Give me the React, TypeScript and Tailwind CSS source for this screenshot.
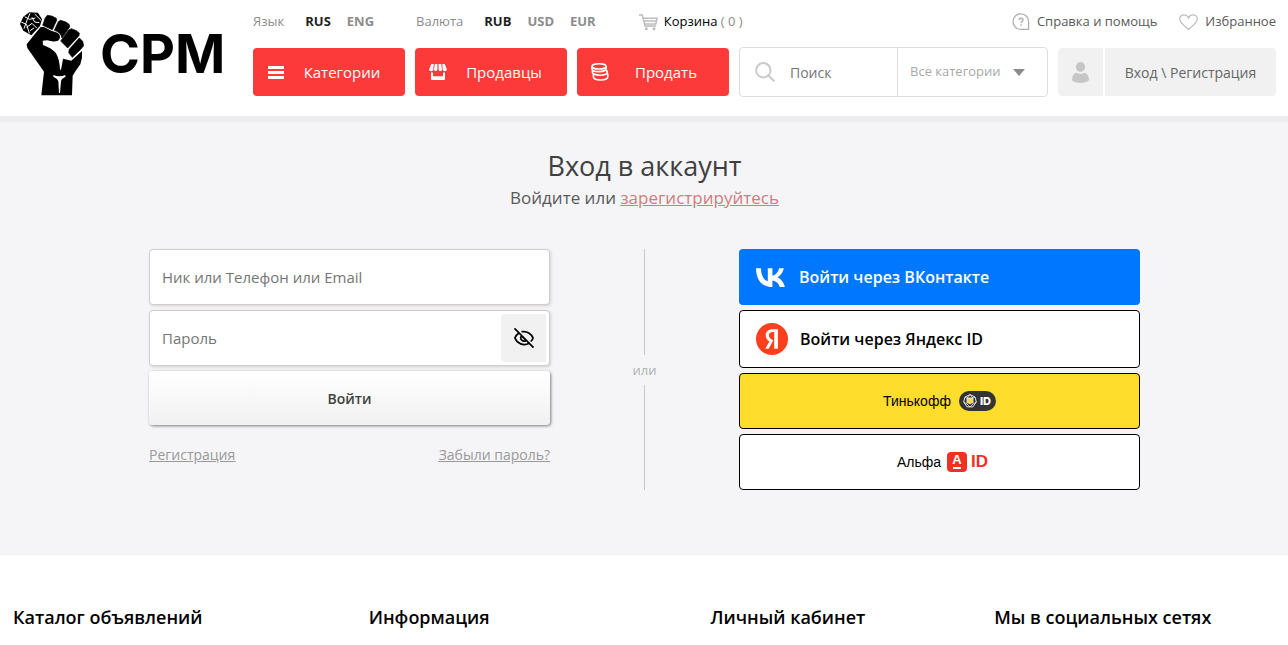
import type { ReactNode } from "react";

const languages = ["RUS", "ENG"];
const currencies = ["RUB", "USD", "EUR"];

const footerColumns = [
  { title: "Каталог объявлений", width: "w-[356px]" },
  { title: "Информация", width: "w-[342px]" },
  { title: "Личный кабинет", width: "w-[284px]" },
  { title: "Мы в социальных сетях", width: "w-[281px]" },
];

function FistLogo() {
  return (
    <svg viewBox="30 36 192 252" className="h-[84px] w-16 shrink-0" aria-hidden>
      {/* microphone */}
      <path d="M30 72 40 50 58 37 84 38 96 58 90 78 64 106 40 92Z" fill="#000" />
      <path
        d="M34 66 50 74 58 100M44 50 58 58 76 54M60 40 52 58 42 86M74 42 94 62M50 82 66 70 80 84M66 52 74 66 88 68M60 92 72 84"
        fill="none"
        stroke="#fff"
        strokeWidth="3"
      />
      {/* arm and palm */}
      <path
        d="M94 286 102 215 52 144 50 133 74 103 92 81 102 81 124 92 142 98Q153 104 149 116L144 122Q130 127 112 121L98 122 99 135Q125 144 138 160 149 180 150 209H153Q156 194 159 176L184 182 216 153Q218 175 211 193 196 214 188 227L186 286Z"
        fill="#000"
      />
      {/* fingers */}
      <g fill="#000" stroke="#000" strokeWidth="2" strokeLinejoin="round">
        <path d="M112 46Q126 46 139 55L140 61 127 89 98 76 106 53Z" />
        <path d="M151 61Q169 64 178 74L179 81 156 114Q153 97 133 91L145 65Z" />
        <path d="M184 86Q199 90 208 99L207 107 173 144 152 123 176 90Z" />
        <path d="M208 114 218 124 221 137 211 149 187 172 176 158 178 148 203 119Z" />
      </g>
      <path d="M130 225Q148 233 166 225L166 231Q154 236 153 244L150 279H147L145 244Q142 235 130 230Z" fill="#fff" />
    </svg>
  );
}

function MenuIcon() {
  return (
    <svg viewBox="0 0 16 13" className="h-[13px] w-4" fill="currentColor" aria-hidden>
      <path d="M0 0h16v3H0zM0 5h16v3H0zM0 10h16v3H0z" />
    </svg>
  );
}

function ShopIcon() {
  return (
    <svg viewBox="0 0 18 16" className="h-4 w-[18px]" fill="currentColor" aria-hidden>
      <path d="M2.3 0h2.4L4.300 5.200a2 2 0 0 1-4.200 0zM5.800 0h2.600v5.200a1.700 1.700 0 0 1-3.400.2zM9.600 0h2.600l.8 5.400a1.700 1.700 0 0 1-3.400-.2zM13.300 0h2.400l2.200 5.200a2 2 0 0 1-4.200 0z" />
      <path d="M2 8.400h2v3.800h10V8.400h2V15a1 1 0 0 1-1 1H3a1 1 0 0 1-1-1z" />
    </svg>
  );
}

function CoinsIcon() {
  return (
    <svg viewBox="0 0 18 18" className="size-[18px]" fill="none" stroke="currentColor" strokeWidth="1.6" aria-hidden>
      <ellipse cx="8" cy="3.4" rx="7.1" ry="2.6" />
      <path d="M.9 3.4v2.4c0 1.6 3.2 2.8 7 2.8s7.2-1.2 7.2-2.8V3.4M1.4 7.2v2c0 1.7 3.4 3 7.5 3s7.4-1.2 7.4-2.9c0-1.3-.7-1.9-1.5-2.3M2.400 11.500v2.300c0 1.800 3.100 3.200 7.200 3.200s7.200-1.400 7.200-3.200v-2.300c0-.7-.3-1.100-.8-1.500" />
    </svg>
  );
}

function CartIcon() {
  return (
    <svg viewBox="0 0 19 17" className="h-[17px] w-[19px]" fill="none" stroke="#bdbdbd" strokeWidth="1.5" aria-hidden>
      <path d="M0 .9h3.3L6 12h11M4.2 4.2h13.9L16.8 10H5.8M5 7h12.4" />
      <circle cx="7.3" cy="14.8" r="1.5" fill="#bdbdbd" stroke="none" />
      <circle cx="15" cy="14.8" r="1.5" fill="#bdbdbd" stroke="none" />
    </svg>
  );
}

function HelpIcon() {
  return (
    <svg viewBox="0 0 18 18" className="size-[18px]" fill="none" stroke="#b0b0b0" strokeWidth="1.3" aria-hidden>
      <path d="M16.6 16.4H9A7.8 7.8 0 1 1 16.6 9z" />
      <path d="M7 7c.1-1.1.9-1.8 2-1.8s2 .7 2 1.7c0 1.4-1.9 1.4-1.9 3.1M9.1 11.3v1.4" strokeWidth="1.4" />
    </svg>
  );
}

function HeartIcon() {
  return (
    <svg viewBox="0 0 19 16" className="h-4 w-[19px]" fill="none" stroke="#bdbdbd" strokeWidth="1.2" aria-hidden>
      <path d="M9.5 15.2C6.5 12.7.7 9.3.7 5.1.7 2.5 2.6.8 4.8.8 7 .8 8.8 2 9.5 4 10.2 2 12 .8 14.2.8c2.2 0 4.1 1.7 4.1 4.3 0 4.2-5.8 7.6-8.8 10.1z" />
    </svg>
  );
}

function SearchIcon() {
  return (
    <svg viewBox="0 0 20 20" className="size-5" fill="none" stroke="#cacaca" strokeWidth="2" aria-hidden>
      <circle cx="8.3" cy="8.3" r="7.2" />
      <path d="m13.5 13.5 5.8 5.8" />
    </svg>
  );
}

function UserIcon() {
  return (
    <svg viewBox="0 0 17 21" className="h-[21px] w-[17px]" fill="#c6c6c6" aria-hidden>
      <ellipse cx="8.5" cy="5" rx="4.6" ry="5" />
      <path d="M4 10.8c3 1.500 6 1.500 9 0 2.600.9 4 3.800 4 7.500C15 20.200 12 21 8.500 21S2 20.200 0 18.300c0-3.700 1.400-6.600 4-7.500z" />
    </svg>
  );
}

function EyeOffIcon() {
  return (
    <svg viewBox="0 0 20 20" className="size-5" fill="none" stroke="#000" strokeWidth="1.7" strokeLinecap="round" aria-hidden>
      <path d="M8.200 3.700C13 2.900 17.300 6 19.100 10c-.4 1.100-1 2.100-1.900 3M4.600 5.200C2.800 6.400 1.600 8 .9 10c2.200 5.600 8.800 8.300 14.200 5.300" />
      <path d="M7.600 7.800c-2.600 3.200 1.600 7 4.500 4.500zM1 .9l18 18.200" />
    </svg>
  );
}

function VkIcon() {
  return (
    <svg viewBox="0 0 29 19" className="h-[19px] w-[29px]" fill="#fff" aria-hidden>
      <path d="M15.500 19C5.800 19 .2 11.900 0 .2h4.900c.2 8.600 3.900 12.200 6.900 13V.2h4.600v7.400c2.800-.3 5.800-3.700 6.800-7.400h4.600c-.8 4.300-4 7.700-6.300 9 2.300 1.100 6 3.900 7.400 9.800h-5.100c-1.100-3.400-3.800-6-7.400-6.400V19z" />
    </svg>
  );
}

function YandexIcon() {
  return (
    <svg viewBox="0 0 32 32" className="size-8" aria-hidden>
      <circle cx="16" cy="16" r="16" fill="#fc3f1d" />
      <path
        d="M18.200 8.900h-1.500c-2.500 0-3.800 1.300-3.800 3.100 0 2.100.9 3.100 2.800 4.400l1.500 1-4.500 8.300H9.200l4.200-7.300c-2.400-1.700-3.700-3.400-3.700-6.200 0-3.500 2.500-5.900 7-5.900h5.200v19.400h-3.700z"
        fill="#fff"
      />
    </svg>
  );
}

function TinkoffBadge() {
  return (
    <span className="flex h-5 w-[37px] items-center gap-[3px] rounded-full bg-[#333] pl-1 font-[Inter,sans-serif] text-[11px] font-extrabold text-white">
      <svg viewBox="0 0 14 14" className="size-[14px]" aria-hidden>
        <path d="M7 .6 12 3l1.300 5-3.400 4.900H4.100L.7 8 2 3z" fill="none" stroke="#e8e8e8" />
        <path d="M7 .6 4 4h6zM2 3l2 1v6L.7 8M12 3l-2 1v6l3.300-2M4 10l3 3 3-3" fill="none" stroke="#e8e8e8" strokeWidth=".8" />
        <path d="M4.500 4.300h5v4.200L7 10 4.500 8.500z" fill="#ffdd2d" stroke="#fff" strokeWidth=".6" />
      </svg>
      ID
    </span>
  );
}

function AlfaBadge() {
  return (
    <span className="flex items-center gap-1 font-['Liberation_Sans',Arial,sans-serif] text-[17px] font-bold text-[#ef3124]">
      <span className="flex size-5 flex-col items-center justify-center gap-0.5 rounded bg-[#ef3124] text-[13px] leading-[10px] text-white">
        A
        <span className="h-0.5 w-2 bg-white" />
      </span>
      ID
    </span>
  );
}

function NavButton({ icon, children }: { icon: ReactNode; children: ReactNode }) {
  return (
    <button
      type="button"
      className="flex h-12 w-[152px] shrink-0 items-center rounded bg-[#fd3a3a] pr-3.5 pl-3.5 text-[15px] text-white"
    >
      <span className="flex w-[18px] shrink-0 justify-center">{icon}</span>
      <span className="flex-1 pl-2 text-center">{children}</span>
    </button>
  );
}

function Switcher({ label, items }: { label: string; items: string[] }) {
  return (
    <div className="flex items-center">
      <span className="mr-[21px] text-[#8c8c8c]">{label}</span>
      <div className="flex gap-4">
        {items.map((item, i) => (
          <a key={item} href="#" className={`font-bold ${i === 0 ? "text-[#1f1f1f]" : "text-[#8c8c8c]"}`}>
            {item}
          </a>
        ))}
      </div>
    </div>
  );
}

function Header() {
  return (
    <header className="flex h-[122px] border-b-6 border-[#ececee] bg-white pr-3 pl-5">
      <a href="#" className="mt-3 flex h-[84px] w-[233px] shrink-0 items-center gap-4" aria-label="CPM">
        <FistLogo />
        <span className="font-[Inter,sans-serif] text-[54px] leading-[84px] font-bold text-black">CPM</span>
      </a>

      <div className="min-w-0 flex-1">
        <div className="flex h-11 items-center text-[13px]">
          <Switcher label="Язык" items={languages} />
          <div className="ml-[42px]">
            <Switcher label="Валюта" items={currencies} />
          </div>
          <a href="#" className="ml-[43px] flex items-center gap-1.5 text-black">
            <CartIcon />
            <span>
              Корзина <span className="text-[#8c8c8c]">( 0 )</span>
            </span>
          </a>
          <div className="ml-auto flex gap-[22px] text-[#595959]">
            <a href="#" className="flex items-center gap-[7px]">
              <HelpIcon />
              Справка и помощь
            </a>
            <a href="#" className="flex items-center gap-[7px]">
              <HeartIcon />
              Избранное
            </a>
          </div>
        </div>

        <div className="mt-[3px] flex items-center gap-2.5">
          <NavButton icon={<MenuIcon />}>Категории</NavButton>
          <NavButton icon={<ShopIcon />}>Продавцы</NavButton>
          <NavButton icon={<CoinsIcon />}>Продать</NavButton>

          <form className="flex h-[50px] min-w-0 flex-1 rounded border border-[#dedede]" role="search">
            <label className="flex min-w-0 flex-1 items-center gap-[15px] pl-[15px]">
              <span className="shrink-0">
                <SearchIcon />
              </span>
              <input
                type="text"
                aria-label="Поиск"
                placeholder="Поиск"
                className="w-full min-w-0 text-[14px] outline-none placeholder:text-[#757575]"
              />
            </label>
            <div className="flex w-[150px] shrink-0 items-center border-l border-[#dedede] pl-3">
              <select
                aria-label="Категория"
                className="w-[103px] appearance-none bg-transparent text-[13px] text-[#a9a9a9] outline-none"
              >
                <option>Все категории</option>
              </select>
              <svg viewBox="0 0 12 7" className="h-[7px] w-3" fill="#8c8c8c" aria-hidden>
                <path d="M0 0h12L6 7z" />
              </svg>
            </div>
          </form>

          <a href="#" className="flex h-12 shrink-0 gap-0.5 text-[14px] text-[#666]">
            <span className="flex w-[45px] items-center justify-center rounded-l bg-[#f1f1f1]">
              <UserIcon />
            </span>
            <span className="flex w-[171px] items-center justify-center rounded-r bg-[#f1f1f1]">Вход \ Регистрация</span>
          </a>
        </div>
      </div>
    </header>
  );
}

function LoginForm() {
  const field =
    "h-14 w-full rounded border border-[#d0cccb] bg-white px-3 text-[15px] shadow-[1px_1px_3px_rgba(0,0,0,0.15)] outline-none placeholder:text-[#757575]";

  return (
    <form className="w-[401px]">
      <div className="flex flex-col gap-[5px]">
        <input type="text" aria-label="Ник или Телефон или Email" placeholder="Ник или Телефон или Email" className={field} />
        <div className="relative">
          <input type="password" aria-label="Пароль" placeholder="Пароль" className={field} />
          <button
            type="button"
            aria-label="Показать пароль"
            className="absolute top-1 right-1 flex h-12 w-[45px] items-center justify-center rounded-l bg-[#f1f1f1]"
          >
            <EyeOffIcon />
          </button>
        </div>
        <button
          type="submit"
          className="h-[54px] rounded bg-linear-to-b from-white to-[#f1f1f1] text-[14px] font-semibold text-[#404040] shadow-[1px_1px_3px_rgba(0,0,0,0.5)]"
        >
          Войти
        </button>
      </div>
      <div className="mt-[19px] flex justify-between text-[14px] text-[#999] underline">
        <a href="#">Регистрация</a>
        <a href="#">Забыли пароль?</a>
      </div>
    </form>
  );
}

function SocialLogin() {
  return (
    <div className="flex w-[401px] flex-col gap-[5px] text-[16px] font-semibold">
      <button type="button" className="flex h-14 items-center gap-3.5 rounded bg-[#0077ff] pl-[17px] text-white">
        <VkIcon />
        Войти через ВКонтакте
      </button>
      <button type="button" className="flex h-[58px] items-center gap-3 rounded border border-black bg-white pl-4 text-black">
        <YandexIcon />
        Войти через Яндекс ID
      </button>
      <button
        type="button"
        className="flex h-14 items-center justify-center gap-2 rounded border border-black bg-[#ffdd2d] text-black"
      >
        <span className="font-['Liberation_Sans',Arial,sans-serif] text-[14px] font-normal">Тинькофф</span>
        <TinkoffBadge />
      </button>
      <button
        type="button"
        className="flex h-14 items-center justify-center gap-1.5 rounded border border-black bg-white pl-1.5 text-black"
      >
        <span className="font-['Liberation_Sans',Arial,sans-serif] text-[14px] font-normal">Альфа</span>
        <AlfaBadge />
      </button>
    </div>
  );
}

export default function App() {
  return (
    <div className="bg-white font-['Open_Sans',sans-serif]">
      <Header />

      <main className="bg-[#f5f5f8] pt-[26px] pb-[65px]">
        <div className="pl-px text-center">
          <h1 className="text-[27px] leading-9 text-[#404040]">Вход в аккаунт</h1>
          <p className="text-[17px] leading-7 text-[#595959]">
            Войдите или{" "}
            <a href="#" className="text-[#d07c7c] underline">
              зарегистрируйтесь
            </a>
          </p>
        </div>
        <div className="mx-auto mt-[37px] flex max-w-[992px] justify-between pl-px">
          <LoginForm />
          <div className="flex flex-col items-center text-[13px] leading-[30px] text-[#b0b0b0]">
            <span className="w-px flex-1 bg-[#c8c8c8]" />
            или
            <span className="w-px flex-1 bg-[#c8c8c8]" />
          </div>
          <SocialLogin />
        </div>
      </main>

      <footer className="flex px-[13px] pt-[49px]">
        {footerColumns.map(({ title, width }) => (
          <h2 key={title} className={`${width} text-[18px] leading-[27px] font-semibold text-black`}>
            {title}
          </h2>
        ))}
      </footer>
    </div>
  );
}
